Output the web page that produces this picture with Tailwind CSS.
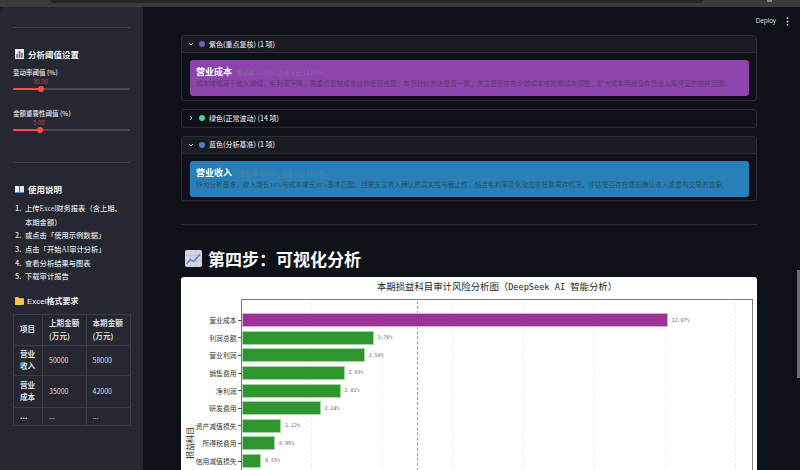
<!DOCTYPE html>
<html lang="zh-CN">
<head>
<meta charset="UTF-8">
<title>审计分析</title>
<script src="https://cdn.jsdelivr.net/npm/@tailwindcss/browser@4"></script>
</head>
<body class="h-[470px] w-[800px] overflow-hidden bg-[#3a3a3b] font-['Noto_Sans_CJK_SC',sans-serif]">

<!-- browser strip -->
<div class="h-[7px] relative">
  <div class="ml-[50px] w-[653px] h-[3px] bg-[#262627] rounded-bl-[4px] rounded-br-[4px]"></div>
  <div class="absolute left-[767px] top-0 w-[5px] h-[2px] bg-[#8a8a8a]"></div>
</div>

<div class="flex h-[463px] bg-[#0e1117]">
  <!-- sidebar -->
  <aside class="w-[143px] shrink-0 bg-[#262730] rounded-tl-[4px] px-[13px] pt-[20px] text-[#e6e6ea]">
    <div class="h-px bg-[#3d3f49]"></div>

    <h3 class="flex items-center gap-[4px] mt-[20px] h-[12px] text-[8.5px] font-bold leading-none text-[#f4f4f6]">
      <svg class="ml-[2px]" width="9" height="10" viewBox="0 0 9 10"><rect width="9" height="10" fill="#eef0f4"/><rect x="1" y="5" width="2" height="4" fill="#4aa3df"/><rect x="3.5" y="2" width="2" height="7" fill="#e0457b"/><rect x="6" y="3.5" width="2" height="5.5" fill="#3fb56b"/></svg>
      分析阈值设置
    </h3>

    <p class="mt-[7px] h-[10px] text-[6.5px] leading-[10px] font-medium">变动率阈值 (%)</p>
    <p class="pl-[20px] mt-[1px] h-[8px] w-[40px] text-[6px] leading-[8px] text-[#d0484c]">30.00</p>
    <div class="relative mt-[2px] h-[2px] bg-[#474954] rounded-full">
      <div class="h-[2px] w-[28px] bg-[#ff4b4b] rounded-full"></div>
      <div class="absolute left-[25px] top-[-2px] w-[6px] h-[6px] rounded-full bg-[#ff4b4b]"></div>
    </div>

    <p class="mt-[18px] h-[10px] text-[6.5px] leading-[10px] font-medium">金额重要性阈值 (%)</p>
    <p class="pl-[20px] mt-[1px] h-[8px] w-[40px] text-[6px] leading-[8px] text-[#d0484c]">5.00</p>
    <div class="relative mt-[2px] h-[2px] bg-[#474954] rounded-full">
      <div class="h-[2px] w-[26px] bg-[#ff4b4b] rounded-full"></div>
      <div class="absolute left-[24px] top-[-2px] w-[6px] h-[6px] rounded-full bg-[#ff4b4b]"></div>
    </div>

    <div class="h-px bg-[#3d3f49] mt-[31px]"></div>

    <h3 class="flex items-center gap-[4px] mt-[20px] h-[12px] text-[8.5px] font-bold leading-none text-[#f0f0f3]">
      <svg class="ml-[2px]" width="9" height="8" viewBox="0 0 9 8"><path d="M0 1h4.2v6.5H0z" fill="#e8f1fb"/><path d="M4.8 1H9v6.5H4.8z" fill="#d5e4f5"/><path d="M0 7h9v1H0z" fill="#4a90d9"/></svg>
      使用说明
    </h3>

    <ol class="mt-[7px] text-[7.3px] leading-[13.7px] font-medium text-[#dfe0e4]">
      <li class="flex h-[27.4px]"><span class="w-[10px] ml-[2px] shrink-0">1.</span><p class="w-[98px]">上传<span class="font-['Liberation_Serif'] leading-none">Excel</span>财务报表（含上期、本期金额）</p></li>
      <li class="flex h-[13.7px]"><span class="w-[10px] ml-[2px] shrink-0">2.</span><span>或点击「使用示例数据」</span></li>
      <li class="flex h-[13.7px]"><span class="w-[10px] ml-[2px] shrink-0">3.</span><span>点击「开始<span class="font-['Liberation_Serif'] leading-none">AI</span>审计分析」</span></li>
      <li class="flex h-[13.7px]"><span class="w-[10px] ml-[2px] shrink-0">4.</span><span>查看分析结果与图表</span></li>
      <li class="flex h-[13.7px]"><span class="w-[10px] ml-[2px] shrink-0">5.</span><span>下载审计报告</span></li>
    </ol>

    <h3 class="flex items-center gap-[3px] mt-[11px] h-[12px] text-[8px] font-bold leading-none text-[#f0f0f3]">
      <svg class="ml-[2px]" width="9" height="8" viewBox="0 0 9 8"><path d="M0 1.2C0 .5.4 0 1 0h2.2l1 1.2H8c.6 0 1 .4 1 1V7c0 .6-.4 1-1 1H1c-.6 0-1-.4-1-1z" fill="#f7c545"/></svg>
      <span><span class="font-['Liberation_Sans'] font-normal">Excel</span>格式要求</span>
    </h3>

    <table class="mt-[6.5px] w-[117px] table-fixed border-collapse text-[7px] leading-[12.4px] text-[#dcdde1]">
      <colgroup><col class="w-[29px]"><col class="w-[43.5px]"><col class="w-[44.5px]"></colgroup>
      <tr class="h-[31px]"><th class="border border-[#3a3c46] px-[6px] text-left text-[7.6px] font-bold">项目</th><th class="border border-[#3a3c46] px-[6px] text-left text-[7.6px] font-bold">上期金额 (万元)</th><th class="border border-[#3a3c46] px-[6px] text-left text-[7.6px] font-bold">本期金额 (万元)</th></tr>
      <tr class="h-[30.5px]"><th class="border border-[#3a3c46] px-[6px] text-left text-[7.6px] font-bold">营业收入</th><td class="border border-[#3a3c46] px-[6px]">50000</td><td class="border border-[#3a3c46] px-[6px]">58000</td></tr>
      <tr class="h-[31.5px]"><th class="border border-[#3a3c46] px-[6px] text-left text-[7.6px] font-bold">营业成本</th><td class="border border-[#3a3c46] px-[6px]">35000</td><td class="border border-[#3a3c46] px-[6px]">42000</td></tr>
      <tr class="h-[18px]"><th class="border border-[#3a3c46] px-[6px] text-left text-[7.6px] font-bold">...</th><td class="border border-[#3a3c46] px-[6px]">...</td><td class="border border-[#3a3c46] px-[6px]">...</td></tr>
    </table>
  </aside>

  <!-- main -->
  <main class="relative flex-1 min-w-0 pl-[38px] pr-[43px] overflow-hidden">
    <div class="absolute top-[9px] right-[11px] flex items-center gap-[10px] h-[10px] text-[#d5d6da]">
      <span class="text-[6.5px] font-['Liberation_Sans'] font-medium">Deploy</span>
      <svg width="3" height="9" viewBox="0 0 3 9" fill="#d5d6da"><circle cx="1.5" cy="1.2" r="0.9"/><circle cx="1.5" cy="4.5" r="0.9"/><circle cx="1.5" cy="7.8" r="0.9"/></svg>
    </div>
    <div class="absolute top-[263px] right-0 w-[3px] h-[108px] bg-[#6c6d72]"></div>

    <!-- 紫色 -->
    <section class="mt-[28px] border border-[#2a2c33] rounded-[3px]">
      <div class="flex items-center h-[17px] bg-[#1a1c24] border-b border-[#2a2c33] px-[6px] text-[7px] font-medium text-[#dcdde1]">
        <svg width="6" height="6" viewBox="0 0 6 6" fill="none" stroke="#d8d9dd" stroke-width="1"><path d="M1 2l2 2 2-2"/></svg>
        <span class="ml-[5px] w-[6px] h-[6px] rounded-full bg-[#7e57c2]"></span>
        <span class="ml-[4px]">紫色(重点复核) (1 项)</span>
      </div>
      <div class="px-[7.5px] pt-[7px] pb-[3.5px]">
        <div class="h-[36px] bg-[#8e44ad] rounded-[3px] px-[6.5px] pt-[2px]">
          <p class="leading-[12px] h-[12px] whitespace-nowrap"><b class="text-[9px] text-white">营业成本</b> <span class="ml-[1px] text-[6px] text-[#8a6a9c]">变动率 20.0% | 占收入比 12.07%</span></p>
          <p class="mt-[4px] text-[6.7px] leading-[11px] text-[#5f3a74] whitespace-nowrap">成本增幅高于收入增幅，毛利率下降，需重点复核成本结转是否完整、存货计价方法是否一致，关注是否存在少转成本或跨期成本调整，扩大成本明细及存货出入库凭证的抽样范围。</p>
        </div>
      </div>
    </section>

    <!-- 绿色 -->
    <section class="mt-[8px] border border-[#2a2c33] rounded-[3px]">
      <div class="flex items-center h-[17px] px-[6px] text-[7px] font-medium text-[#dcdde1]">
        <svg width="6" height="6" viewBox="0 0 6 6" fill="none" stroke="#d8d9dd" stroke-width="1"><path d="M2 1l2 2-2 2"/></svg>
        <span class="ml-[5px] w-[6px] h-[6px] rounded-full bg-[#4fce85]"></span>
        <span class="ml-[4px]">绿色(正常波动) (14 项)</span>
      </div>
    </section>

    <!-- 蓝色 -->
    <section class="mt-[8px] border border-[#2a2c33] rounded-[3px]">
      <div class="flex items-center h-[17px] bg-[#1a1c24] border-b border-[#2a2c33] px-[6px] text-[7px] font-medium text-[#dcdde1]">
        <svg width="6" height="6" viewBox="0 0 6 6" fill="none" stroke="#d8d9dd" stroke-width="1"><path d="M1 2l2 2 2-2"/></svg>
        <span class="ml-[5px] w-[6px] h-[6px] rounded-full bg-[#4a7fdc]"></span>
        <span class="ml-[4px]">蓝色(分析基准) (1 项)</span>
      </div>
      <div class="px-[7.5px] pt-[7px] pb-[3.5px]">
        <div class="h-[36px] bg-[#2980b9] rounded-[3px] px-[6.5px] pt-[2px]">
          <p class="leading-[12px] h-[12px] whitespace-nowrap"><b class="text-[9px] text-white">营业收入</b> <span class="ml-[1px] text-[6px] text-[#5a7f9c]">| 变动率 16.0% | 占收入比 13.79%</span></p>
          <p class="mt-[4px] text-[6.7px] leading-[11px] text-[#274f6e] whitespace-nowrap">作为分析基准，收入增长<span class="font-['Liberation_Serif'] leading-none">16%</span>与成本增长<span class="font-['Liberation_Serif'] leading-none">20%</span>基本匹配，但需关注收入确认的真实性与截止性，结合毛利率变化及应收账款周转情况，评估是否存在提前确认收入或虚构交易的迹象。</p>
        </div>
      </div>
    </section>

    <div class="h-px bg-[#2c2e35] mt-[23px]"></div>

    <h2 class="flex items-center gap-[6px] mt-[21px] h-[24px] pl-[4px] text-[17px] font-bold leading-none text-[#fafafa]">
      <svg width="17" height="17" viewBox="0 0 17 17"><rect width="17" height="17" rx="2" fill="#d9d2e4"/><path d="M0 5.5h17M0 11h17M5.5 0v17M11 0v17" stroke="#b9b1c9" stroke-width=".5"/><path d="M1.5 14l4-4.5 3 2L15 4" fill="none" stroke="#3d8fdc" stroke-width="1.4"/></svg>
      第四步：可视化分析
    </h2>

    <!-- chart -->
    <div class="relative mt-[7px] h-[200px] bg-white rounded-[3px] overflow-hidden">
      <p class="pt-[3px] pl-[56px] text-center text-[9.4px] leading-[12px] text-[#262626]">本期损益科目审计风险分析图（<span class="font-['DejaVu_Sans_Mono'] text-[8.6px]">DeepSeek AI </span>智能分析）</p>

      <div class="absolute top-[22px] left-[60px] right-[4px] h-[200px] border-[1.5px] border-[#7d7d7d]"></div>

      <!-- grid lines -->
      <div class="absolute top-[24px] left-[130px] h-[180px] border-l border-dashed border-[#eeeeee]"></div>
      <div class="absolute top-[24px] left-[201px] h-[180px] border-l border-dashed border-[#eeeeee]"></div>
      <div class="absolute top-[24px] left-[271px] h-[180px] border-l border-dashed border-[#eeeeee]"></div>
      <div class="absolute top-[24px] left-[342px] h-[180px] border-l border-dashed border-[#eeeeee]"></div>
      <div class="absolute top-[24px] left-[413px] h-[180px] border-l border-dashed border-[#eeeeee]"></div>
      <div class="absolute top-[24px] left-[484px] h-[180px] border-l border-dashed border-[#eeeeee]"></div>
      <div class="absolute top-[24px] left-[554px] h-[180px] border-l border-dashed border-[#eeeeee]"></div>
      <div class="absolute top-[24px] left-[236px] h-[180px] border-l border-dashed border-[#9a9a9a]"></div>

      <div class="absolute top-[161px] left-[-7.5px] w-[32px] h-[10px] text-[8px] leading-[10px] text-[#262626] whitespace-nowrap -rotate-90">损益科目</div>

      <!-- bars -->
      <div class="absolute top-[34.5px] left-0 right-0 text-[6.8px] text-[#333]">
        <div class="flex items-center h-[17.6px]">
          <span class="w-[55.5px] text-right">营业成本</span><span class="w-[3.5px] h-px bg-[#555] ml-[1.5px]"></span>
          <span class="h-[14px] bg-[#9b3296] border border-[#dba9da]" style="width:426px"></span><span class="ml-[4px] font-['DejaVu_Sans_Mono'] text-[5px] text-[#666]">12.07%</span>
        </div>
        <div class="flex items-center h-[17.6px]">
          <span class="w-[55.5px] text-right">利润总额</span><span class="w-[3.5px] h-px bg-[#555] ml-[1.5px]"></span>
          <span class="h-[14px] bg-[#2f962f] border border-[#a5d6a5]" style="width:132px"></span><span class="ml-[4px] font-['DejaVu_Sans_Mono'] text-[5px] text-[#666]">3.76%</span>
        </div>
        <div class="flex items-center h-[17.6px]">
          <span class="w-[55.5px] text-right">营业利润</span><span class="w-[3.5px] h-px bg-[#555] ml-[1.5px]"></span>
          <span class="h-[14px] bg-[#2f962f] border border-[#a5d6a5]" style="width:123px"></span><span class="ml-[4px] font-['DejaVu_Sans_Mono'] text-[5px] text-[#666]">3.50%</span>
        </div>
        <div class="flex items-center h-[17.6px]">
          <span class="w-[55.5px] text-right">销售费用</span><span class="w-[3.5px] h-px bg-[#555] ml-[1.5px]"></span>
          <span class="h-[14px] bg-[#2f962f] border border-[#a5d6a5]" style="width:103px"></span><span class="ml-[4px] font-['DejaVu_Sans_Mono'] text-[5px] text-[#666]">2.93%</span>
        </div>
        <div class="flex items-center h-[17.6px]">
          <span class="w-[55.5px] text-right">净利润</span><span class="w-[3.5px] h-px bg-[#555] ml-[1.5px]"></span>
          <span class="h-[14px] bg-[#2f962f] border border-[#a5d6a5]" style="width:99px"></span><span class="ml-[4px] font-['DejaVu_Sans_Mono'] text-[5px] text-[#666]">2.81%</span>
        </div>
        <div class="flex items-center h-[17.6px]">
          <span class="w-[55.5px] text-right">研发费用</span><span class="w-[3.5px] h-px bg-[#555] ml-[1.5px]"></span>
          <span class="h-[14px] bg-[#2f962f] border border-[#a5d6a5]" style="width:79px"></span><span class="ml-[4px] font-['DejaVu_Sans_Mono'] text-[5px] text-[#666]">2.24%</span>
        </div>
        <div class="flex items-center h-[17.6px]">
          <span class="w-[55.5px] text-right">资产减值损失</span><span class="w-[3.5px] h-px bg-[#555] ml-[1.5px]"></span>
          <span class="h-[14px] bg-[#2f962f] border border-[#a5d6a5]" style="width:39.5px"></span><span class="ml-[4px] font-['DejaVu_Sans_Mono'] text-[5px] text-[#666]">1.12%</span>
        </div>
        <div class="flex items-center h-[17.6px]">
          <span class="w-[55.5px] text-right">所得税费用</span><span class="w-[3.5px] h-px bg-[#555] ml-[1.5px]"></span>
          <span class="h-[14px] bg-[#2f962f] border border-[#a5d6a5]" style="width:33.5px"></span><span class="ml-[4px] font-['DejaVu_Sans_Mono'] text-[5px] text-[#666]">0.95%</span>
        </div>
        <div class="flex items-center h-[17.6px]">
          <span class="w-[55.5px] text-right">信用减值损失</span><span class="w-[3.5px] h-px bg-[#555] ml-[1.5px]"></span>
          <span class="h-[14px] bg-[#2f962f] border border-[#a5d6a5]" style="width:19.5px"></span><span class="ml-[4px] font-['DejaVu_Sans_Mono'] text-[5px] text-[#666]">0.55%</span>
        </div>
      </div>
    </div>
  </main>
</div>
</body>
</html>
